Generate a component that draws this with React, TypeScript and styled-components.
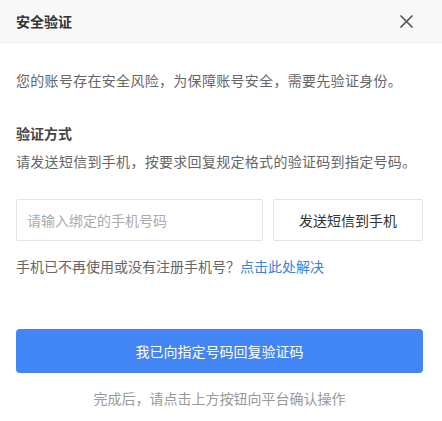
import React from "react";
import styled, { createGlobalStyle } from "styled-components";

const Global = createGlobalStyle`
  html, body { margin: 0; padding: 0; background: #ffffff; }
  body { font-family: "Noto Sans CJK SC", "Noto Sans", "Liberation Sans", sans-serif; }
  * { box-sizing: border-box; }
`;

const Dialog = styled.div`
  width: 442px;
  height: 421px;
  background: #fff;
  display: flex;
  flex-direction: column;
`;

const Header = styled.div`
  height: 43px;
  background: #f8f8f8;
  border-bottom: 1px solid #efefef;
  display: flex;
  align-items: center;
  justify-content: space-between;
  padding: 0 29px 0 16px;
`;

const Title = styled.h1`
  margin: 0;
  font-size: 14px;
  font-weight: 700;
  color: #333;
  line-height: 20px;
`;

const CloseButton = styled.button`
  width: 13px;
  height: 13px;
  padding: 0;
  border: none;
  background: transparent;
  display: flex;
  cursor: pointer;
`;

const Body = styled.div`
  padding: 27px 19px 0 16px;
  display: flex;
  flex-direction: column;
`;

const Text = styled.p<{ $top?: number; $color?: string; $center?: boolean; $spaced?: boolean }>`
  margin: ${(p) => p.$top ?? 0}px 0 0;
  font-size: 14px;
  line-height: 20px;
  color: ${(p) => p.$color ?? "#666"};
  text-align: ${(p) => (p.$center ? "center" : "left")};
  letter-spacing: ${(p) => (p.$spaced ? "0.3px" : "0")};
  white-space: nowrap;
`;

const Heading = styled.h2`
  margin: 33px 0 0;
  font-size: 14px;
  line-height: 20px;
  font-weight: 700;
  color: #444;
`;

const InputRow = styled.div`
  margin-top: 28px;
  display: flex;
  gap: 10px;
  height: 42px;
`;

const PhoneInput = styled.input`
  flex: 1;
  min-width: 0;
  height: 42px;
  border: 1px solid #e4e4e4;
  border-radius: 2px;
  padding: 0 10px;
  font-family: inherit;
  font-size: 14px;
  color: #333;
  outline: none;
  &::placeholder { color: #aaa; }
`;

const SendButton = styled.button`
  width: 150px;
  height: 42px;
  border: 1px solid #e4e4e4;
  border-radius: 2px;
  background: #fff;
  font-family: inherit;
  font-size: 14px;
  color: #333;
  cursor: pointer;
`;

const Link = styled.a`
  color: #3d80db;
  text-decoration: none;
  cursor: pointer;
`;

const PrimaryButton = styled.button`
  margin-top: 53px;
  width: 100%;
  height: 44px;
  border: none;
  border-radius: 4px;
  background: #4285f4;
  color: #fff;
  font-family: inherit;
  font-size: 14px;
  cursor: pointer;
`;

export default function App() {
  return (
    <>
      <Global />
      <Dialog>
        <Header>
          <Title>安全验证</Title>
          <CloseButton aria-label="关闭">
            <svg width="13" height="13" viewBox="0 0 13 13">
              <path d="M1 1 L12 12 M12 1 L1 12" stroke="#555" strokeWidth="1.7" strokeLinecap="round" />
            </svg>
          </CloseButton>
        </Header>
        <Body>
          <Text $spaced>您的账号存在安全风险，为保障账号安全，需要先验证身份。</Text>
          <Heading>验证方式</Heading>
          <Text $top={8} $spaced>请发送短信到手机，按要求回复规定格式的验证码到指定号码。</Text>
          <InputRow>
            <PhoneInput placeholder="请输入绑定的手机号码" />
            <SendButton>发送短信到手机</SendButton>
          </InputRow>
          <Text $top={15}>
            手机已不再使用或没有注册手机号？<Link>点击此处解决</Link>
          </Text>
          <PrimaryButton>我已向指定号码回复验证码</PrimaryButton>
          <Text $top={15} $color="#999" $center>
            完成后，请点击上方按钮向平台确认操作
          </Text>
        </Body>
      </Dialog>
    </>
  );
}
